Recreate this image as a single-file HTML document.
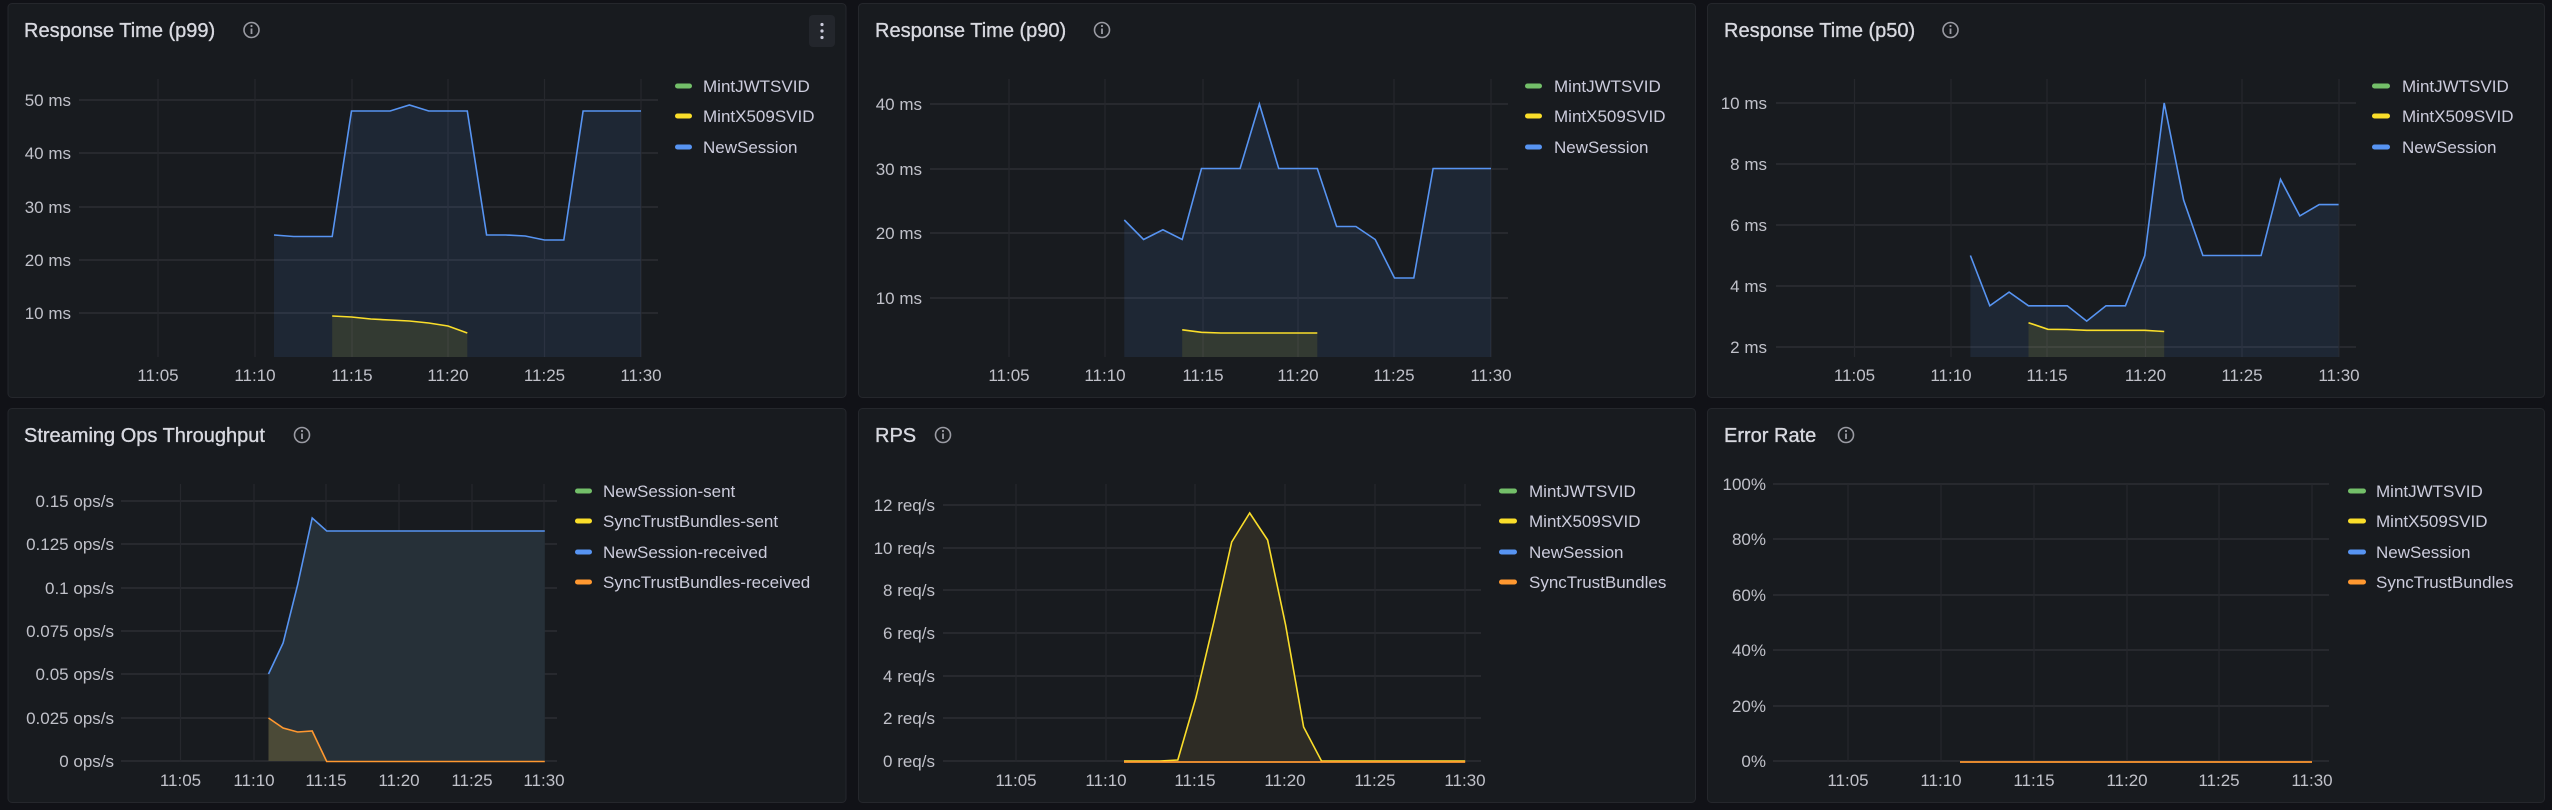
<!DOCTYPE html>
<html><head><meta charset="utf-8">
<style>
html,body{margin:0;padding:0;background:#111217;width:2552px;height:810px;overflow:hidden}
svg{display:block}
text{font-family:"Liberation Sans",sans-serif}
.t{font-size:20px;fill:#d8d9e0;stroke:#d8d9e0;stroke-width:0.35}
.ax{font-size:17px;fill:#c0c1c9}
.lg{font-size:17px;fill:#ccccdc}
.gh{stroke:#2c2e34;stroke-width:1.6}
.gv{stroke:#26282d;stroke-width:1.2}
</style></head><body>
<svg width="2552" height="810" viewBox="0 0 2552 810" xmlns="http://www.w3.org/2000/svg">
<defs>
<g id="info"><circle cx="0" cy="0" r="7.5" fill="none" stroke="#9a9ba3" stroke-width="1.6"/><rect x="-0.9" y="-1.5" width="1.8" height="5.5" fill="#9a9ba3"/><circle cx="0" cy="-4" r="1.1" fill="#9a9ba3"/></g>
</defs>

<!-- Panel 1 -->
<g transform="translate(0,0)">
<rect x="8" y="3.5" width="838" height="394" rx="4" fill="#181b1f" stroke="#25272c"/>
<text class="t" x="24" y="37">Response Time (p99)</text>
<use href="#info" x="251.5" y="30"/>
<rect x="809" y="15" width="26" height="32" rx="4" fill="#23262c"/>
<circle cx="822" cy="24.5" r="1.6" fill="#ccccdc"/><circle cx="822" cy="31" r="1.6" fill="#ccccdc"/><circle cx="822" cy="37.5" r="1.6" fill="#ccccdc"/>
<g class="gh"><line x1="79" x2="658" y1="100" y2="100"/><line x1="79" x2="658" y1="153" y2="153"/><line x1="79" x2="658" y1="207" y2="207"/><line x1="79" x2="658" y1="260" y2="260"/><line x1="79" x2="658" y1="313" y2="313"/></g>
<g class="gv"><line x1="158" x2="158" y1="79" y2="357"/><line x1="255" x2="255" y1="79" y2="357"/><line x1="352" x2="352" y1="79" y2="357"/><line x1="448" x2="448" y1="79" y2="357"/><line x1="544.5" x2="544.5" y1="79" y2="357"/><line x1="641" x2="641" y1="79" y2="357"/></g>
<g class="ax" text-anchor="end"><text x="71" y="106">50 ms</text><text x="71" y="159">40 ms</text><text x="71" y="213">30 ms</text><text x="71" y="266">20 ms</text><text x="71" y="319">10 ms</text></g>
<g class="ax" text-anchor="middle"><text x="158" y="381">11:05</text><text x="255" y="381">11:10</text><text x="352" y="381">11:15</text><text x="448" y="381">11:20</text><text x="544.5" y="381">11:25</text><text x="641" y="381">11:30</text></g>
<polygon fill="rgba(87,148,242,0.10)" points="274,235 293.6,236.5 312.9,236.5 332.2,236.5 351.5,111 370.8,111 390.1,111 409.4,105 428.7,111 448,111 467.3,111 486.6,235 505.9,235 525.2,236 544.5,240 563.8,240 583.1,111 602.4,111 621.7,111 641,111 641,357 274,357"/>
<polyline fill="none" stroke="#5794f2" stroke-width="1.6" points="274,235 293.6,236.5 312.9,236.5 332.2,236.5 351.5,111 370.8,111 390.1,111 409.4,105 428.7,111 448,111 467.3,111 486.6,235 505.9,235 525.2,236 544.5,240 563.8,240 583.1,111 602.4,111 621.7,111 641,111"/>
<polygon fill="rgba(250,222,42,0.10)" points="332.2,316 351.5,317 370.8,319 390.1,320 409.4,321 428.7,323 448,326 467.3,333 467.3,357 332.2,357"/>
<polyline fill="none" stroke="#fade2a" stroke-width="1.6" points="332.2,316 351.5,317 370.8,319 390.1,320 409.4,321 428.7,323 448,326 467.3,333"/>
<rect x="675" y="83.5" width="17" height="5" rx="2.5" fill="#73bf69"/><text class="lg" x="703" y="92">MintJWTSVID</text>
<rect x="675" y="113.5" width="17" height="5" rx="2.5" fill="#fade2a"/><text class="lg" x="703" y="122">MintX509SVID</text>
<rect x="675" y="144.5" width="17" height="5" rx="2.5" fill="#5794f2"/><text class="lg" x="703" y="153">NewSession</text>
</g>

<!-- Panel 2 -->
<g transform="translate(850,0)">
<rect x="8.5" y="3.5" width="837" height="394" rx="4" fill="#181b1f" stroke="#25272c"/>
<text class="t" x="25" y="37">Response Time (p90)</text>
<use href="#info" x="252" y="30"/>
<g class="gh"><line x1="80" x2="658" y1="104" y2="104"/><line x1="80" x2="658" y1="169" y2="169"/><line x1="80" x2="658" y1="233" y2="233"/><line x1="80" x2="658" y1="298" y2="298"/></g>
<g class="gv"><line x1="159" x2="159" y1="79" y2="357"/><line x1="255" x2="255" y1="79" y2="357"/><line x1="353" x2="353" y1="79" y2="357"/><line x1="448" x2="448" y1="79" y2="357"/><line x1="544" x2="544" y1="79" y2="357"/><line x1="641" x2="641" y1="79" y2="357"/></g>
<g class="ax" text-anchor="end"><text x="72" y="110">40 ms</text><text x="72" y="175">30 ms</text><text x="72" y="239">20 ms</text><text x="72" y="304">10 ms</text></g>
<g class="ax" text-anchor="middle"><text x="159" y="381">11:05</text><text x="255" y="381">11:10</text><text x="353" y="381">11:15</text><text x="448" y="381">11:20</text><text x="544" y="381">11:25</text><text x="641" y="381">11:30</text></g>
<polygon fill="rgba(87,148,242,0.10)" points="274.3,220 293.6,239.5 312.9,229.8 332.2,239.5 351.5,168.5 370.8,168.5 390.1,168.5 409.4,104 428.7,168.5 448,168.5 467.3,168.5 486.6,226.5 505.9,226.5 525.2,239.5 544.5,278 563.8,278 583.1,168.5 602.4,168.5 621.7,168.5 641,168.5 641,357 274.3,357"/>
<polyline fill="none" stroke="#5794f2" stroke-width="1.6" points="274.3,220 293.6,239.5 312.9,229.8 332.2,239.5 351.5,168.5 370.8,168.5 390.1,168.5 409.4,104 428.7,168.5 448,168.5 467.3,168.5 486.6,226.5 505.9,226.5 525.2,239.5 544.5,278 563.8,278 583.1,168.5 602.4,168.5 621.7,168.5 641,168.5"/>
<polygon fill="rgba(250,222,42,0.10)" points="332.2,329.8 351.5,332.3 370.8,333 467.3,333 467.3,357 332.2,357"/>
<polyline fill="none" stroke="#fade2a" stroke-width="1.6" points="332.2,329.8 351.5,332.3 370.8,333 467.3,333"/>
<rect x="675" y="83.5" width="17" height="5" rx="2.5" fill="#73bf69"/><text class="lg" x="704" y="92">MintJWTSVID</text>
<rect x="675" y="113.5" width="17" height="5" rx="2.5" fill="#fade2a"/><text class="lg" x="704" y="122">MintX509SVID</text>
<rect x="675" y="144.5" width="17" height="5" rx="2.5" fill="#5794f2"/><text class="lg" x="704" y="153">NewSession</text>
</g>

<!-- Panel 3 -->
<g transform="translate(1700,0)">
<rect x="7.5" y="3.5" width="837" height="394" rx="4" fill="#181b1f" stroke="#25272c"/>
<text class="t" x="24" y="37">Response Time (p50)</text>
<use href="#info" x="250.5" y="30"/>
<g class="gh"><line x1="76" x2="656" y1="103" y2="103"/><line x1="76" x2="656" y1="164" y2="164"/><line x1="76" x2="656" y1="225" y2="225"/><line x1="76" x2="656" y1="286" y2="286"/><line x1="76" x2="656" y1="347" y2="347"/></g>
<g class="gv"><line x1="154.5" x2="154.5" y1="79" y2="357"/><line x1="251" x2="251" y1="79" y2="357"/><line x1="347" x2="347" y1="79" y2="357"/><line x1="445.5" x2="445.5" y1="79" y2="357"/><line x1="542" x2="542" y1="79" y2="357"/><line x1="639" x2="639" y1="79" y2="357"/></g>
<g class="ax" text-anchor="end"><text x="67" y="109">10 ms</text><text x="67" y="170">8 ms</text><text x="67" y="231">6 ms</text><text x="67" y="292">4 ms</text><text x="67" y="353">2 ms</text></g>
<g class="ax" text-anchor="middle"><text x="154.5" y="381">11:05</text><text x="251" y="381">11:10</text><text x="347" y="381">11:15</text><text x="445.5" y="381">11:20</text><text x="542" y="381">11:25</text><text x="639" y="381">11:30</text></g>
<polygon fill="rgba(87,148,242,0.10)" points="270.4,255.5 289.8,305.8 309.1,292.1 328.5,305.8 347.9,305.8 367.3,305.8 386.7,321.1 406,305.8 425.4,305.8 444.8,255.5 464.2,103 483.6,200 502.9,255.5 522.3,255.5 541.7,255.5 561.1,255.5 580.5,179.3 599.8,215.9 619.2,204.6 638.6,204.6 638.6,357 270.4,357"/>
<polyline fill="none" stroke="#5794f2" stroke-width="1.6" points="270.4,255.5 289.8,305.8 309.1,292.1 328.5,305.8 347.9,305.8 367.3,305.8 386.7,321.1 406,305.8 425.4,305.8 444.8,255.5 464.2,103 483.6,200 502.9,255.5 522.3,255.5 541.7,255.5 561.1,255.5 580.5,179.3 599.8,215.9 619.2,204.6 638.6,204.6"/>
<polygon fill="rgba(250,222,42,0.10)" points="328.5,322.7 347.9,329.3 367.3,329.5 386.7,330.3 444.8,330.3 464.2,331.5 464.2,357 328.5,357"/>
<polyline fill="none" stroke="#fade2a" stroke-width="1.6" points="328.5,322.7 347.9,329.3 367.3,329.5 386.7,330.3 444.8,330.3 464.2,331.5"/>
<rect x="672" y="83.5" width="18" height="5" rx="2.5" fill="#73bf69"/><text class="lg" x="702" y="92">MintJWTSVID</text>
<rect x="672" y="113.5" width="18" height="5" rx="2.5" fill="#fade2a"/><text class="lg" x="702" y="122">MintX509SVID</text>
<rect x="672" y="144.5" width="18" height="5" rx="2.5" fill="#5794f2"/><text class="lg" x="702" y="153">NewSession</text>
</g>

<!-- Panel 4 -->
<g transform="translate(0,405)">
<rect x="8" y="3.5" width="838" height="394" rx="4" fill="#181b1f" stroke="#25272c"/>
<text class="t" x="24" y="37">Streaming Ops Throughput</text>
<use href="#info" x="302" y="30"/>
<g class="gh"><line x1="121" x2="557" y1="96" y2="96"/><line x1="121" x2="557" y1="139" y2="139"/><line x1="121" x2="557" y1="183" y2="183"/><line x1="121" x2="557" y1="226" y2="226"/><line x1="121" x2="557" y1="269" y2="269"/><line x1="121" x2="557" y1="313" y2="313"/><line x1="121" x2="557" y1="356" y2="356"/></g>
<g class="gv"><line x1="180.5" x2="180.5" y1="79" y2="357"/><line x1="254" x2="254" y1="79" y2="357"/><line x1="326" x2="326" y1="79" y2="357"/><line x1="399" x2="399" y1="79" y2="357"/><line x1="472" x2="472" y1="79" y2="357"/><line x1="544" x2="544" y1="79" y2="357"/></g>
<g class="ax" text-anchor="end"><text x="114" y="102">0.15 ops/s</text><text x="114" y="145">0.125 ops/s</text><text x="114" y="189">0.1 ops/s</text><text x="114" y="232">0.075 ops/s</text><text x="114" y="275">0.05 ops/s</text><text x="114" y="319">0.025 ops/s</text><text x="114" y="362">0 ops/s</text></g>
<g class="ax" text-anchor="middle"><text x="180.5" y="381">11:05</text><text x="254" y="381">11:10</text><text x="326" y="381">11:15</text><text x="399" y="381">11:20</text><text x="472" y="381">11:25</text><text x="544" y="381">11:30</text></g>
<polygon fill="#263038" points="268.5,269 283.1,238 297.6,180 312.2,113 326.7,126 544.8,126 544.8,356 268.5,356"/>
<polyline fill="none" stroke="#5794f2" stroke-width="1.6" points="268.5,269 283.1,238 297.6,180 312.2,113 326.7,126 544.8,126"/>
<polygon fill="#4b4a37" points="268.5,313 283.1,323 297.6,327 312.2,326 326.7,356 268.5,356"/>
<polyline fill="none" stroke="#ff9830" stroke-width="1.6" points="268.5,313 283.1,323 297.6,327 312.2,326 326.7,356.5 544.8,356.5"/>
<rect x="575" y="83.5" width="17" height="5" rx="2.5" fill="#73bf69"/><text class="lg" x="603" y="92">NewSession-sent</text>
<rect x="575" y="113.5" width="17" height="5" rx="2.5" fill="#fade2a"/><text class="lg" x="603" y="122">SyncTrustBundles-sent</text>
<rect x="575" y="144.5" width="17" height="5" rx="2.5" fill="#5794f2"/><text class="lg" x="603" y="153">NewSession-received</text>
<rect x="575" y="174.5" width="17" height="5" rx="2.5" fill="#ff9830"/><text class="lg" x="603" y="183">SyncTrustBundles-received</text>
</g>

<!-- Panel 5 -->
<g transform="translate(850,405)">
<rect x="8.5" y="3.5" width="837" height="394" rx="4" fill="#181b1f" stroke="#25272c"/>
<text class="t" x="25" y="37">RPS</text>
<use href="#info" x="93" y="30"/>
<g class="gh"><line x1="93" x2="631" y1="100" y2="100"/><line x1="93" x2="631" y1="143" y2="143"/><line x1="93" x2="631" y1="185" y2="185"/><line x1="93" x2="631" y1="228" y2="228"/><line x1="93" x2="631" y1="271" y2="271"/><line x1="93" x2="631" y1="313" y2="313"/><line x1="93" x2="631" y1="356" y2="356"/></g>
<g class="gv"><line x1="166" x2="166" y1="79" y2="357"/><line x1="256" x2="256" y1="79" y2="357"/><line x1="345" x2="345" y1="79" y2="357"/><line x1="435" x2="435" y1="79" y2="357"/><line x1="525" x2="525" y1="79" y2="357"/><line x1="615" x2="615" y1="79" y2="357"/></g>
<g class="ax" text-anchor="end"><text x="85" y="106">12 req/s</text><text x="85" y="149">10 req/s</text><text x="85" y="191">8 req/s</text><text x="85" y="234">6 req/s</text><text x="85" y="277">4 req/s</text><text x="85" y="319">2 req/s</text><text x="85" y="362">0 req/s</text></g>
<g class="ax" text-anchor="middle"><text x="166" y="381">11:05</text><text x="256" y="381">11:10</text><text x="345" y="381">11:15</text><text x="435" y="381">11:20</text><text x="525" y="381">11:25</text><text x="615" y="381">11:30</text></g>
<polygon fill="#2e2c25" points="327.8,355 345.8,293 363.8,217 381.7,137 399.7,108 417.6,135 435.6,220 453.6,322 471.5,356 327.8,356"/>
<polyline fill="none" stroke="#fade2a" stroke-width="1.6" points="274,356 309.9,356 327.8,355 345.8,293 363.8,217 381.7,137 399.7,108 417.6,135 435.6,220 453.6,322 471.5,356 615.2,356"/>
<line x1="274" x2="615.2" y1="357" y2="357" stroke="#ff9830" stroke-width="1.8"/>
<rect x="649" y="83.5" width="18" height="5" rx="2.5" fill="#73bf69"/><text class="lg" x="679" y="92">MintJWTSVID</text>
<rect x="649" y="113.5" width="18" height="5" rx="2.5" fill="#fade2a"/><text class="lg" x="679" y="122">MintX509SVID</text>
<rect x="649" y="144.5" width="18" height="5" rx="2.5" fill="#5794f2"/><text class="lg" x="679" y="153">NewSession</text>
<rect x="649" y="174.5" width="18" height="5" rx="2.5" fill="#ff9830"/><text class="lg" x="679" y="183">SyncTrustBundles</text>
</g>

<!-- Panel 6 -->
<g transform="translate(1700,405)">
<rect x="7.5" y="3.5" width="837" height="394" rx="4" fill="#181b1f" stroke="#25272c"/>
<text class="t" x="24" y="37">Error Rate</text>
<use href="#info" x="146" y="30"/>
<g class="gh"><line x1="73" x2="629" y1="79" y2="79"/><line x1="73" x2="629" y1="134" y2="134"/><line x1="73" x2="629" y1="190" y2="190"/><line x1="73" x2="629" y1="245" y2="245"/><line x1="73" x2="629" y1="301" y2="301"/><line x1="73" x2="629" y1="356" y2="356"/></g>
<g class="gv"><line x1="148" x2="148" y1="79" y2="357"/><line x1="241" x2="241" y1="79" y2="357"/><line x1="334" x2="334" y1="79" y2="357"/><line x1="427" x2="427" y1="79" y2="357"/><line x1="519" x2="519" y1="79" y2="357"/><line x1="612" x2="612" y1="79" y2="357"/></g>
<g class="ax" text-anchor="end"><text x="66" y="85">100%</text><text x="66" y="140">80%</text><text x="66" y="196">60%</text><text x="66" y="251">40%</text><text x="66" y="307">20%</text><text x="66" y="362">0%</text></g>
<g class="ax" text-anchor="middle"><text x="148" y="381">11:05</text><text x="241" y="381">11:10</text><text x="334" y="381">11:15</text><text x="427" y="381">11:20</text><text x="519" y="381">11:25</text><text x="612" y="381">11:30</text></g>
<line x1="260" x2="612" y1="357" y2="357" stroke="#ff9830" stroke-width="1.8"/>
<rect x="648" y="83.5" width="18" height="5" rx="2.5" fill="#73bf69"/><text class="lg" x="676" y="92">MintJWTSVID</text>
<rect x="648" y="113.5" width="18" height="5" rx="2.5" fill="#fade2a"/><text class="lg" x="676" y="122">MintX509SVID</text>
<rect x="648" y="144.5" width="18" height="5" rx="2.5" fill="#5794f2"/><text class="lg" x="676" y="153">NewSession</text>
<rect x="648" y="174.5" width="18" height="5" rx="2.5" fill="#ff9830"/><text class="lg" x="676" y="183">SyncTrustBundles</text>
</g>
</svg>
</body></html>
